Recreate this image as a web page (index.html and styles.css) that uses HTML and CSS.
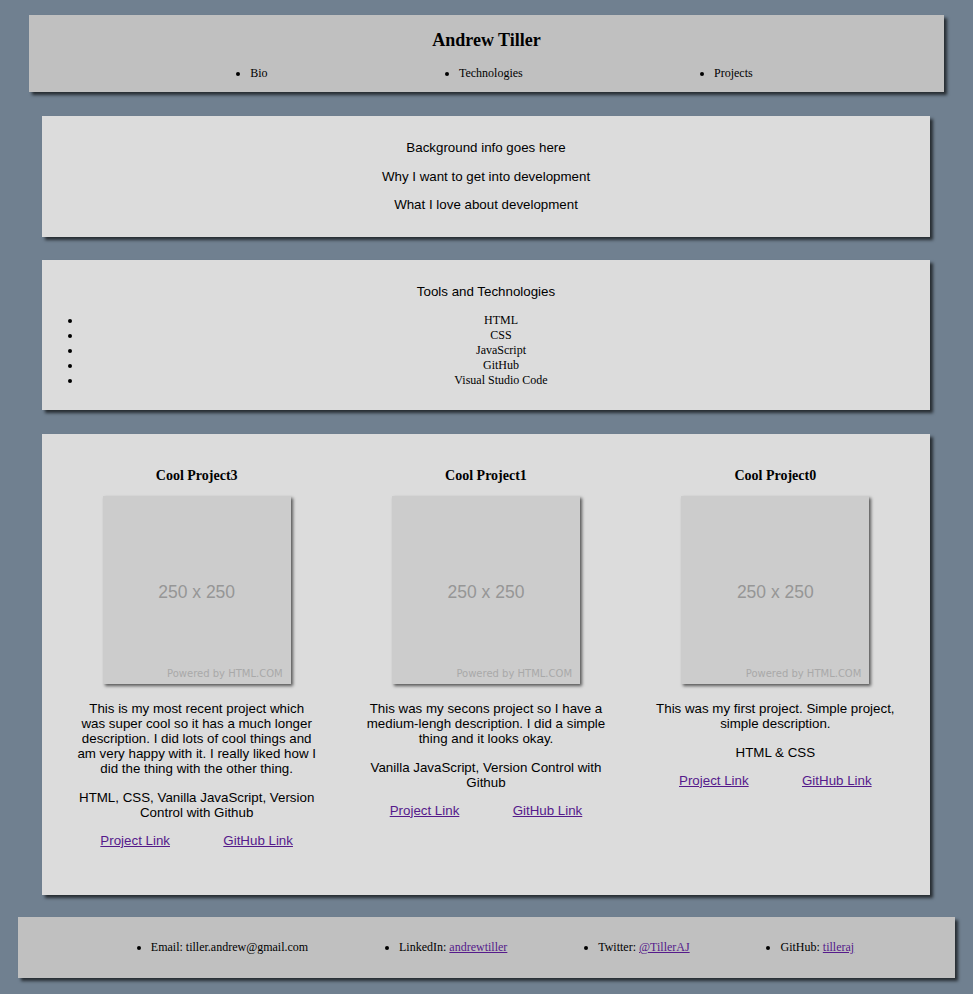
FILE: index.html
```html
<!DOCTYPE html>
<html lang="en">
<head>
<meta charset="utf-8">
<title>Andrew Tiller</title>
<link rel="stylesheet" href="styles.css">
</head>
<body>
<header class="site-header">
  <h1 class="site-title">Andrew Tiller</h1>
  <ul class="nav">
    <li>Bio</li>
    <li>Technologies</li>
    <li>Projects</li>
  </ul>
</header>

<section class="card bio">
  <p>Background info goes here</p>
  <p>Why I want to get into development</p>
  <p>What I love about development</p>
</section>

<section class="card tools">
  <p class="tools-title">Tools and Technologies</p>
  <ul class="tools-list">
    <li>HTML</li>
    <li>CSS</li>
    <li>JavaScript</li>
    <li>GitHub</li>
    <li>Visual Studio Code</li>
  </ul>
</section>

<section class="card projects">
  <article class="project">
    <h3 class="project-title">Cool Project3</h3>
    <div class="thumb"><span class="thumb-size">250 x 250</span><span class="thumb-credit">Powered by HTML.COM</span></div>
    <p class="desc first">This is my most recent project which was super cool so it has a much longer description. I did lots of cool things and am very happy with it. I really liked how I did the thing with the other thing.</p>
    <p class="desc">HTML, CSS, Vanilla JavaScript, Version Control with Github</p>
    <div class="links"><a href="#">Project Link</a><a href="#">GitHub Link</a></div>
  </article>
  <article class="project">
    <h3 class="project-title">Cool Project1</h3>
    <div class="thumb"><span class="thumb-size">250 x 250</span><span class="thumb-credit">Powered by HTML.COM</span></div>
    <p class="desc first">This was my secons project so I have a medium-lengh description. I did a simple thing and it looks okay.</p>
    <p class="desc">Vanilla JavaScript, Version Control with Github</p>
    <div class="links"><a href="#">Project Link</a><a href="#">GitHub Link</a></div>
  </article>
  <article class="project">
    <h3 class="project-title">Cool Project0</h3>
    <div class="thumb"><span class="thumb-size">250 x 250</span><span class="thumb-credit">Powered by HTML.COM</span></div>
    <p class="desc first">This was my first project. Simple project, simple description.</p>
    <p class="desc">HTML &amp; CSS</p>
    <div class="links"><a href="#">Project Link</a><a href="#">GitHub Link</a></div>
  </article>
</section>

<footer class="site-footer">
  <ul class="contact">
    <li>Email: tiller.andrew@gmail.com</li>
    <li>LinkedIn: <a href="#">andrewtiller</a></li>
    <li>Twitter: <a href="#">@TillerAJ</a></li>
    <li>GitHub: <a href="#">tilleraj</a></li>
  </ul>
</footer>
</body>
</html>
```

FILE: styles.css
```css
html, body {
  margin: 0;
  padding: 0;
}

body {
  background: #708090;
  color: #000;
  font-family: "Liberation Serif", "Times New Roman", serif;
  font-size: 12px;
  padding: 15px 0 15px;
}

a {
  color: #551a8b;
  text-decoration: underline;
}

/* header */
.site-header {
  margin: 0 29px;
  background: #c0c0c0;
  box-shadow: 3px 3px 3px rgba(0, 0, 0, 0.65);
  padding: 14px 0 11px;
}

.site-title {
  margin: 0;
  font-size: 18px;
  line-height: 22px;
  text-align: center;
  font-weight: bold;
}

.nav {
  display: flex;
  justify-content: space-evenly;
  margin: 15px 0 0;
  padding: 0 0 0 30px;
  line-height: 15px;
}

/* cards */
.card {
  margin: 24px 43px 0 42px;
  background: #dcdcdc;
  box-shadow: 3px 3px 3px rgba(0, 0, 0, 0.65);
  padding: 10px;
}

.bio {
  padding: 11px 10px 12px;
  text-align: center;
  font-family: "Liberation Sans", Arial, sans-serif;
  font-size: 13.333px;
}

.bio p {
  margin: 13.333px 0;
  line-height: 15px;
}

.tools {
  margin-top: 23px;
  text-align: center;
}

.tools-title {
  margin: 13.333px 0;
  line-height: 15px;
  font-family: "Liberation Sans", Arial, sans-serif;
  font-size: 13.333px;
}

.tools-list {
  margin: 14.5px 0 12px;
  padding: 0 0 0 30px;
  line-height: 15px;
}

/* projects */
.projects {
  display: grid;
  grid-template-columns: repeat(3, 1fr);
  align-items: start;
}

.project {
  text-align: center;
  font-family: "Liberation Sans", Arial, sans-serif;
  font-size: 13.333px;
  padding-bottom: 24px;
}

.project-title {
  font-family: "Liberation Serif", "Times New Roman", serif;
  font-size: 14px;
  line-height: 16px;
  font-weight: bold;
  margin: 24px 0 12px;
}

.thumb {
  width: 65%;
  aspect-ratio: 1 / 1;
  margin: 0 auto;
  background: #cccccc;
  box-shadow: 2px 2px 3px rgba(0, 0, 0, 0.6);
  display: grid;
}

.thumb-size {
  grid-area: 1 / 1;
  place-self: center;
  margin-top: 4px;
  color: #969696;
  font-family: "Liberation Sans", Arial, sans-serif;
  font-size: 17.5px;
}

.thumb-credit {
  grid-area: 1 / 1;
  align-self: end;
  justify-self: end;
  margin: 0 8px 5px 0;
  color: #a9a9a9;
  font-family: "DejaVu Sans", Verdana, sans-serif;
  font-size: 10px;
  line-height: 11px;
}

.desc {
  width: 240px;
  margin: 13.333px auto;
  line-height: 15px;
}

.desc.first {
  margin-top: 17px;
}

.links {
  width: 85%;
  margin: 13.333px auto;
  display: flex;
  justify-content: space-around;
  line-height: 15px;
}

/* footer */
.site-footer {
  margin: 22px 18px 0;
  background: #c0c0c0;
  box-shadow: 3px 3px 3px rgba(0, 0, 0, 0.65);
  padding: 11px 10px;
}

.contact {
  display: flex;
  justify-content: space-evenly;
  margin: 12px 0;
  padding: 0 0 0 32px;
  line-height: 15px;
}
```
